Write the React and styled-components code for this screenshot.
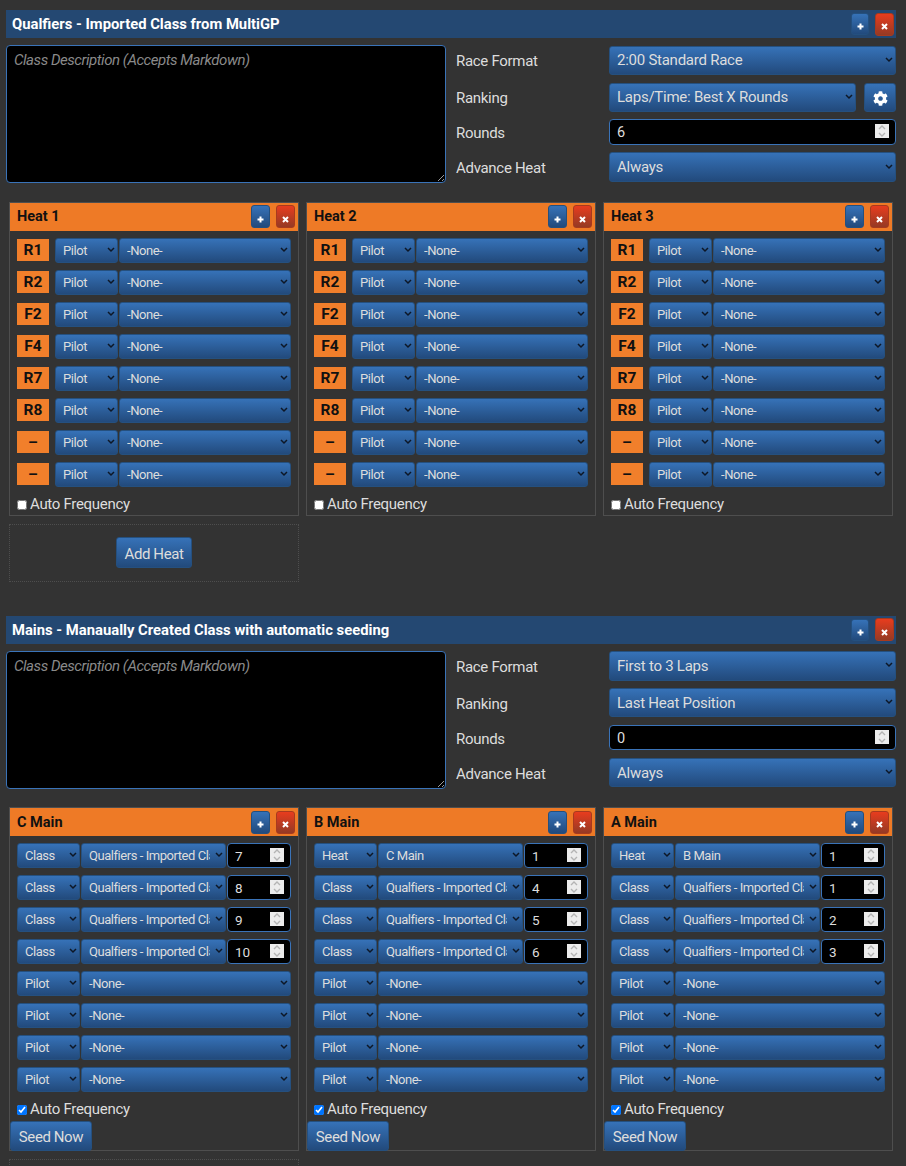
import React from 'react';
import styled, { createGlobalStyle } from 'styled-components';
import { FaCog } from 'react-icons/fa';

const slots = ['R1', 'R2', 'F2', 'F4', 'R7', 'R8', '–', '–'];
const qual = 'Qualfiers - Imported Class from MultiGP';

const pilotRow = { type: 'Pilot', source: '-None-' };
const classRow = (value) => ({ type: 'Class', source: qual, value });
const heatRow = (source, value) => ({ type: 'Heat', source, value });
const fillPilots = (rows) => [...rows, pilotRow, pilotRow, pilotRow, pilotRow];

const sections = [
  {
    title: 'Qualfiers - Imported Class from MultiGP',
    format: '2:00 Standard Race',
    ranking: 'Laps/Time: Best X Rounds',
    hasSettings: true,
    rounds: 6,
    auto: false,
    heats: [1, 2, 3].map((n) => ({
      name: `Heat ${n}`,
      rows: [...Array(8)].map(() => pilotRow),
    })),
  },
  {
    title: 'Mains - Manaually Created Class with automatic seeding',
    format: 'First to 3 Laps',
    ranking: 'Last Heat Position',
    rounds: 0,
    auto: true,
    heats: [
      { name: 'C Main', rows: fillPilots([classRow(7), classRow(8), classRow(9), classRow(10)]) },
      { name: 'B Main', rows: fillPilots([heatRow('C Main', 1), classRow(4), classRow(5), classRow(6)]) },
      { name: 'A Main', rows: fillPilots([heatRow('B Main', 1), classRow(1), classRow(2), classRow(3)]) },
    ],
  },
];

const spinnerSvg = encodeURIComponent(
  '<svg xmlns="http://www.w3.org/2000/svg" width="14" height="14" viewBox="0 0 14 14"><path d="M4 5l3-3 3 3M4 9l3 3 3-3" fill="none" stroke="#b4b4b4" stroke-width="1.4"/></svg>'
);

const PlusIcon = () => (
  <svg width="7" height="7" viewBox="0 0 7 7">
    <path d="M3.5 .5v6M.5 3.5h6" stroke="#fff" strokeWidth="2" />
  </svg>
);

const CloseIcon = () => (
  <svg width="7" height="7" viewBox="0 0 7 7">
    <path d="M1 1l5 5M6 1l-5 5" stroke="#fff" strokeWidth="2" />
  </svg>
);

const Dropdown = ({ value, $w, $grow, $tall }) => (
  <SelectBox $w={$w} $grow={$grow}>
    <Select defaultValue={value} $tall={$tall}>
      <option>{value}</option>
    </Select>
    <Chevron width="8" height="6" viewBox="0 0 8 6">
      <path d="M1 1l3 3 3-3" fill="none" stroke="#0d1726" strokeWidth="1.5" />
    </Chevron>
  </SelectBox>
);

const Actions = ({ $large }) => (
  <ActionGroup>
    <IconButton $large={$large}><PlusIcon /></IconButton>
    <IconButton $danger><CloseIcon /></IconButton>
  </ActionGroup>
);

const HeatCard = ({ heat, auto }) => (
  <Card>
    <CardHeader>
      <CardTitle>{heat.name}</CardTitle>
      <Actions />
    </CardHeader>
    <Rows>
      {heat.rows.map((row, i) => (
        <Row key={i}>
          {!auto && <Badge>{slots[i]}</Badge>}
          <Dropdown value={row.type} $w="63px" />
          <Dropdown value={row.source} $grow />
          {row.value !== undefined && <RowNumber type="number" defaultValue={row.value} />}
        </Row>
      ))}
    </Rows>
    <AutoLabel>
      <input type="checkbox" defaultChecked={auto} />
      Auto Frequency
    </AutoLabel>
    {auto && <SeedButton>Seed Now</SeedButton>}
  </Card>
);

const ClassSection = ({ data }) => (
  <Section>
    <SectionHeader>
      <SectionTitle>{data.title}</SectionTitle>
      <Actions $large />
    </SectionHeader>
    <Settings>
      <Description placeholder="Class Description (Accepts Markdown)" />
      <Fields>
        <FieldLabel>Race Format</FieldLabel>
        <Dropdown value={data.format} $tall />
        <FieldLabel>Ranking</FieldLabel>
        <RankingRow>
          <Dropdown value={data.ranking} $tall $grow />
          {data.hasSettings && (
            <GearButton><FaCog size={15} /></GearButton>
          )}
        </RankingRow>
        <FieldLabel>Rounds</FieldLabel>
        <RoundsInput type="number" defaultValue={data.rounds} />
        <FieldLabel>Advance Heat</FieldLabel>
        <Dropdown value="Always" $tall />
      </Fields>
    </Settings>
    <Heats>
      {data.heats.map((heat) => (
        <HeatCard key={heat.name} heat={heat} auto={data.auto} />
      ))}
      <AddCard>
        <AddButton>Add Heat</AddButton>
      </AddCard>
    </Heats>
  </Section>
);

const App = () => (
  <>
    <GlobalStyle />
    <Page>
      {sections.map((s) => (
        <ClassSection key={s.title} data={s} />
      ))}
    </Page>
  </>
);

const blueGradient = 'linear-gradient(to bottom, #3672b8, #224a7c)';
const font = '"Roboto", "Liberation Sans", sans-serif';

const GlobalStyle = createGlobalStyle`
  html, body {
    margin: 0;
    height: 100%;
    overflow: hidden;
    background: #333333;
    color: #dddddd;
    font-family: ${font};
  }
  * {
    box-sizing: border-box;
  }
`;

const Page = styled.div`
  padding: 10px 10px 0 6px;
`;

const Section = styled.section`
  margin-bottom: 34px;
`;

const SectionHeader = styled.div`
  height: 28px;
  padding: 0 2px 0 6px;
  background: #244872;
  display: flex;
  align-items: center;
  justify-content: space-between;
`;

const SectionTitle = styled.h2`
  margin: 0;
  font-size: 14.8px;
  font-weight: 700;
  color: #fff;
`;

const ActionGroup = styled.div`
  display: flex;
  align-items: center;
  gap: 6px;
`;

const IconButton = styled.button`
  width: ${({ $large }) => ($large ? '18px' : '19px')};
  height: ${({ $large }) => ($large ? '22px' : '23px')};
  padding: 5px 0 0;
  display: flex;
  align-items: center;
  justify-content: center;
  border-radius: 3px;
  border: 1px solid ${({ $danger }) => ($danger ? '#a83a1e' : '#24507f')};
  background: ${({ $danger }) =>
    $danger ? 'linear-gradient(to bottom, #e83c1e, #953a24)' : blueGradient};
`;

const Settings = styled.div`
  margin-top: 7px;
  display: grid;
  grid-template-columns: 440px 1fr;
`;

const Description = styled.textarea`
  width: 440px;
  height: 138px;
  padding: 5px 7px;
  background: #000;
  color: #ddd;
  border: 1px solid #3a73b8;
  border-radius: 4px;
  font-family: ${font};
  font-size: 15px;
  letter-spacing: -0.45px;
  outline: none;
  &::placeholder {
    font-style: italic;
    color: #8a8a8a;
  }
`;

const Fields = styled.div`
  padding: 0.7px 0 0 10px;
  display: grid;
  grid-template-columns: 153px 287px;
  grid-auto-rows: min-content;
  row-gap: 7.5px;
  align-items: center;
`;

const FieldLabel = styled.div`
  padding-top: 2px;
  font-size: 15px;
  letter-spacing: -0.3px;
  color: #dddddd;
`;

const RankingRow = styled.div`
  display: flex;
  gap: 8px;
`;

const SelectBox = styled.div`
  position: relative;
  min-width: 0;
  width: ${({ $w }) => $w || 'auto'};
  flex: ${({ $grow }) => ($grow ? '1 1 0' : '0 0 auto')};
`;

const Select = styled.select`
  display: block;
  appearance: none;
  width: 100%;
  height: ${({ $tall }) => ($tall ? '29.4px' : '25px')};
  padding: 0 15px 0 7px;
  border: 1px solid #25507f;
  border-radius: 3px;
  background: ${blueGradient};
  color: #dddddd;
  font-family: ${font};
  font-size: ${({ $tall }) => ($tall ? '15px' : '13px')};
  letter-spacing: ${({ $tall }) => ($tall ? '-0.25px' : '-0.45px')};
  outline: none;
`;

const Chevron = styled.svg`
  position: absolute;
  top: 50%;
  right: 3.5px;
  margin-top: -3.5px;
  pointer-events: none;
`;

const GearButton = styled.button`
  flex: 0 0 32px;
  padding: 3px 0 0;
  display: flex;
  align-items: center;
  justify-content: center;
  color: #fff;
  border: 1px solid #25507f;
  border-radius: 3px;
  background: ${blueGradient};
`;

const RoundsInput = styled.input`
  width: 100%;
  height: 25.5px;
  padding: 1.5px 6px 0 7px;
  background: #000;
  color: #ddd;
  border: 1px solid #3a73b8;
  border-radius: 4px;
  font-family: ${font};
  font-size: 14.5px;
  outline: none;
  &::-webkit-inner-spin-button {
    appearance: none;
    opacity: 1;
    width: 14px;
    height: 14px;
    background: #ececec url("data:image/svg+xml,${spinnerSvg}") center no-repeat;
  }
`;

const RowNumber = styled(RoundsInput)`
  flex: 0 0 64px;
  width: 64px;
  height: 25px;
  font-size: 13.5px;
`;

const Heats = styled.div`
  margin-top: 18.5px;
  padding-left: 3px;
  display: grid;
  grid-template-columns: repeat(3, 290px);
  gap: 8px 7px;
`;

const Card = styled.div`
  border: 1px solid #4e4e4e;
`;

const CardHeader = styled.div`
  height: 28px;
  padding: 0 3px 0 7px;
  background: #ee7a26;
  display: flex;
  align-items: center;
  justify-content: space-between;
`;

const CardTitle = styled.h3`
  margin: 0;
  font-size: 14.5px;
  font-weight: 700;
  color: #111;
`;

const Rows = styled.div`
  padding: 7px 7px 0;
  display: grid;
  row-gap: 7px;
`;

const Row = styled.div`
  display: flex;
  align-items: center;
  gap: 1px;
`;

const Badge = styled.div`
  flex: 0 0 32px;
  height: 22px;
  margin-right: 5px;
  background: #f17f2b;
  color: #111;
  font-size: 15.5px;
  font-weight: 700;
  display: flex;
  align-items: center;
  justify-content: center;
`;

const AutoLabel = styled.label`
  height: 28px;
  padding: 6px 0 0 7px;
  display: flex;
  align-items: center;
  font-size: 15px;
  letter-spacing: -0.3px;
  color: #dddddd;
  input {
    width: 10px;
    height: 10px;
    margin: 2px 3px 0 0;
  }
`;

const SeedButton = styled.button`
  display: block;
  width: 82px;
  height: 30px;
  margin: 1px 0 -1px;
  padding: 2px 0 0;
  border: 1px solid #25507f;
  border-radius: 3px;
  background: ${blueGradient};
  color: #dddddd;
  font-family: ${font};
  font-size: 15px;
  letter-spacing: -0.4px;
`;

const AddCard = styled.div`
  height: 58px;
  border: 1px dotted #4e4e4e;
  display: flex;
  align-items: center;
  justify-content: center;
`;

const AddButton = styled(SeedButton)`
  width: 76px;
  height: 31px;
  margin: 0;
`;

export default App;
